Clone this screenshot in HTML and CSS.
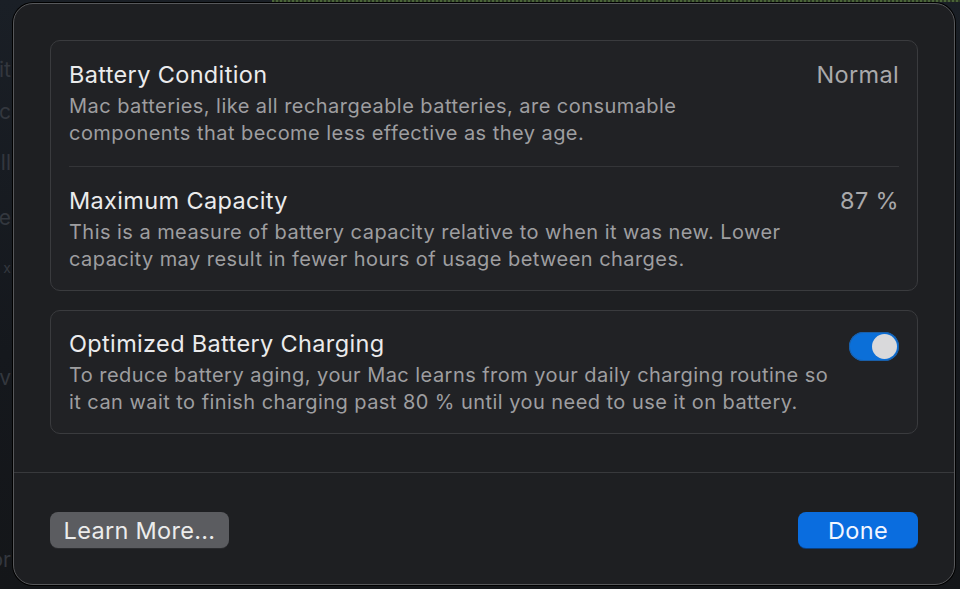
FILE: index.html
```html
<!DOCTYPE html>
<html>
<head>
<meta charset="utf-8">
<link rel="stylesheet" href="styles.css">
</head>
<body>
<div class="backdrop">
  <div class="top-strip"></div>
  <div class="bg-words">
    <span class="w w1">it</span>
    <span class="w w2">c</span>
    <span class="w w3">ll</span>
    <span class="w w4">e</span>
    <span class="w w5">x</span>
    <span class="w w6">v</span>
    <span class="w w7">or</span>
  </div>
</div>
<div class="sheet">
  <div class="content">
    <div class="group">
      <div class="row">
        <div class="text">
          <div class="title">Battery Condition</div>
          <div class="desc">Mac batteries, like all rechargeable batteries, are consumable<br>components that become less effective as they age.</div>
        </div>
        <div class="value">Normal</div>
      </div>
      <div class="sep"></div>
      <div class="row row2">
        <div class="text">
          <div class="title">Maximum Capacity</div>
          <div class="desc">This is a measure of battery capacity relative to when it was new. Lower<br>capacity may result in fewer hours of usage between charges.</div>
        </div>
        <div class="value">87 %</div>
      </div>
    </div>
    <div class="group group2">
      <div class="row row3">
        <div class="text">
          <div class="title">Optimized Battery Charging</div>
          <div class="desc">To reduce battery aging, your Mac learns from your daily charging routine so<br>it can wait to finish charging past 80 % until you need to use it on battery.</div>
        </div>
        <div class="toggle"><div class="knob"></div></div>
      </div>
    </div>
  </div>
  <div class="footer">
    <button class="btn btn-gray">Learn More...</button>
    <button class="btn btn-blue">Done</button>
  </div>
</div>
</body>
</html>
```
FILE: styles.css
```css
html, body {
  margin: 0;
  padding: 0;
  width: 960px;
  height: 589px;
  overflow: hidden;
}
body {
  background: linear-gradient(180deg, #1a1f26 0%, #15181d 60%, #141619 100%);
  font-family: Inter, "Noto Sans", sans-serif;
  position: relative;
}
.backdrop {
  height: 589px;
}
.top-strip {
  margin-left: 272px;
  height: 2px;
  background: repeating-linear-gradient(90deg, #4a6438 0 2px, #2c3a24 2px 4px);
}
.bg-words {
  display: flex;
  flex-direction: column;
  align-items: flex-end;
  width: 11px;
  color: #33373e;
  font-size: 21px;
}
.w { display: block; line-height: 24px; }
.w1 { margin-top: 56px; }
.w2 { margin-top: 18px; }
.w3 { margin-top: 27px; }
.w4 { margin-top: 31px; }
.w5 { margin-top: 26px; font-size: 14px; }
.w6 { margin-top: 86px; }
.w7 { margin-top: 158px; }

.sheet {
  position: absolute;
  left: 13px;
  top: 3px;
  width: 940px;
  height: 580px;
  background: #1e1f22;
  border: 1px solid #57585b;
  border-radius: 20px;
  box-shadow: 0 0 0 1px #000;
  display: flex;
  flex-direction: column;
}
.content {
  padding: 36px 36px 38px 36px;
  border-bottom: 1px solid #38393c;
}
.group {
  border: 1px solid #3a3b3e;
  border-radius: 10px;
  background: #212225;
  padding: 0 18px;
}
.group2 {
  margin-top: 19px;
}
.row {
  display: flex;
  justify-content: space-between;
  align-items: flex-start;
  padding: 20px 0 20px 0;
}
.row2 {
  padding: 20px 0 18px 0;
}
.row3 {
  padding: 19px 0 18px 0;
}
.sep {
  height: 1px;
  background: #343538;
}
.title {
  color: #ebebec;
  font-size: 23.5px;
  letter-spacing: 0.35px;
  line-height: 27px;
  margin-bottom: 5px;
}
.desc {
  color: #9e9ea0;
  font-size: 20px;
  letter-spacing: 0.45px;
  line-height: 26.5px;
}
.value {
  color: #a9a9ab;
  font-size: 23.5px;
  letter-spacing: 0.35px;
  line-height: 27px;
}
.toggle {
  width: 50px;
  height: 29px;
  border-radius: 15px;
  background: #0b6fd8;
  box-shadow: inset 0 0 0 1px #1a5fa8;
  display: flex;
  justify-content: flex-end;
  align-items: center;
  padding: 0 2px;
  box-sizing: border-box;
  margin-top: 2px;
}
.knob {
  width: 25px;
  height: 25px;
  border-radius: 50%;
  background: #d9d9db;
}
.footer {
  display: flex;
  justify-content: space-between;
  align-items: flex-start;
  padding: 39px 36px 0 36px;
}
.btn {
  font-family: Inter, "Noto Sans", sans-serif;
  font-size: 23.5px;
  letter-spacing: 0.3px;
  height: 36px;
  border: none;
  border-radius: 8px;
  color: #ececec;
  padding: 0;
}
.btn-gray {
  width: 179px;
  background: #5b5c60;
  box-shadow: 0 1px 0 #2a2b2e;
}
.btn-blue {
  width: 120px;
  background: #0a6ddf;
  color: #f2f6ff;
  box-shadow: 0 1px 0 #0a3f80;
}
```
